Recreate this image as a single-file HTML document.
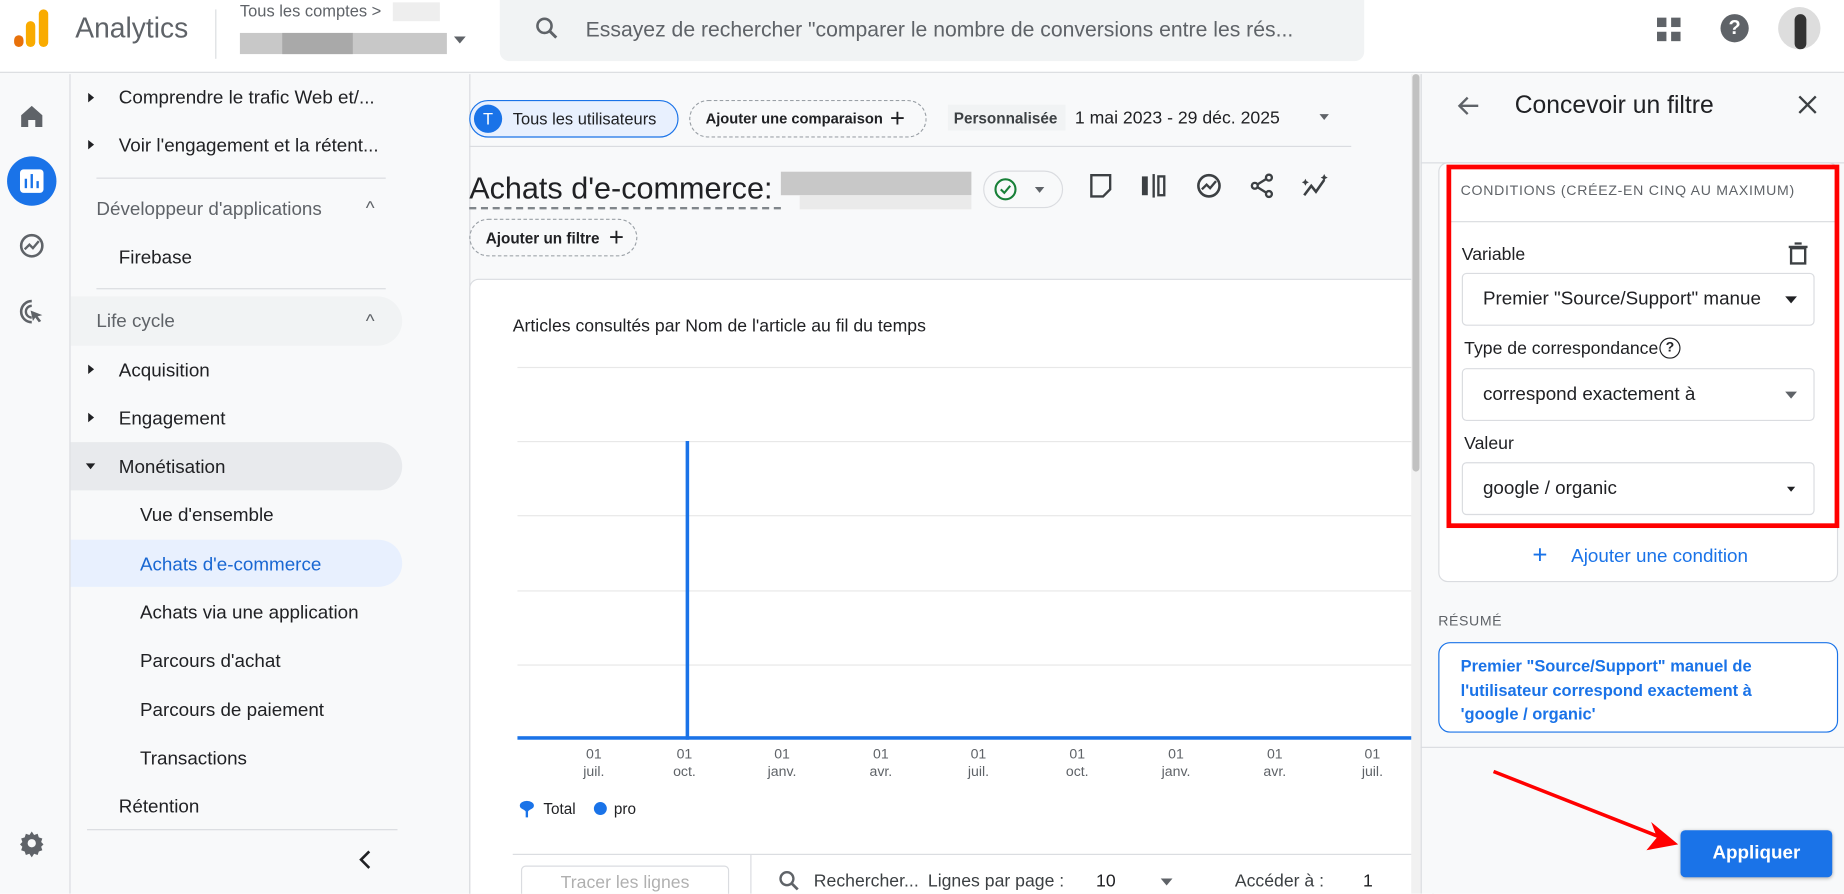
<!DOCTYPE html>
<html><head><meta charset="utf-8"><style>
*{box-sizing:border-box;margin:0;padding:0}
body{width:1844px;height:894px;overflow:hidden;background:#fff;font-family:"Liberation Sans",Arial,sans-serif;color:#202124}
#w{position:absolute;left:0;top:0;width:1568px;height:760px;transform:scale(1.17602);transform-origin:0 0;background:#f8f9fa;overflow:hidden}
.a{position:absolute;white-space:nowrap}
.nav{font-size:16px;color:#202124}
.tri{position:absolute;width:0;height:0;border-top:4px solid transparent;border-bottom:4px solid transparent;border-left:5px solid #202124}
.chip{position:absolute;border:1px dashed #9aa0a6;border-radius:16px;font-size:13px;font-weight:bold;color:#202124;display:flex;align-items:center;padding-left:13px;white-space:nowrap}
.gl{position:absolute;left:440px;width:762px;height:1px;background:#e8e8e8}
.xl{position:absolute;font-size:12px;color:#5f6368;text-align:center;width:40px;line-height:15px}
.sel{position:absolute;left:1243px;width:300px;height:45px;border:1px solid #dadce0;border-radius:4px;background:#fff;font-size:16px;padding-left:17px;display:flex;align-items:center;overflow:hidden;white-space:nowrap}
.dd{position:absolute;right:14px;top:19px;border-left:5px solid transparent;border-right:5px solid transparent;border-top:6px solid #202124}
svg{position:absolute}
</style></head><body><div id="w">
<div class="a" style="left:0;top:0;width:1568px;height:62px;background:#fff;border-bottom:1px solid #dadce0"></div>
<div class="a" style="left:12px;top:30px;width:8px;height:10px;background:#e8710a;border-radius:4px"></div>
<div class="a" style="left:22px;top:18px;width:8px;height:22px;background:#f9ab00;border-radius:4px"></div>
<div class="a" style="left:33px;top:8px;width:8px;height:32px;background:#f9ab00;border-radius:4px"></div>
<div class="a" style="left:64px;top:11px;font-size:24px;color:#5f6368">Analytics</div>
<div class="a" style="left:183px;top:8px;width:1px;height:42px;background:#dadce0"></div>
<div class="a" style="left:204px;top:1px;font-size:14px;color:#5f6368">Tous les comptes &gt;</div>
<div class="a" style="left:334px;top:2px;width:40px;height:16px;background:#eee"></div>
<div class="a" style="left:204px;top:28px;width:176px;height:18px;background:#c8c8c8"></div>
<div class="a" style="left:240px;top:28px;width:60px;height:18px;background:#a9a9a9"></div>
<div class="a" style="left:386px;top:31px;border-left:5px solid transparent;border-right:5px solid transparent;border-top:6px solid #5f6368"></div>
<div class="a" style="left:425px;top:0;width:735px;height:52px;background:#f1f3f4;border-radius:0 0 8px 8px"></div>
<svg style="left:453px;top:12px" width="24" height="24" viewBox="0 0 24 24"><circle cx="10" cy="10" r="6" fill="none" stroke="#5f6368" stroke-width="2.2"/><path d="M14.5 14.5l5.5 5.5" stroke="#5f6368" stroke-width="2.5"/></svg>
<div class="a" style="left:498px;top:15px;font-size:18px;color:#5f6368">Essayez de rechercher "comparer le nombre de conversions entre les rés...</div>
<svg style="left:1408px;top:14px" width="24" height="24" viewBox="0 0 24 24"><g fill="#5f6368"><rect x="1" y="1" width="8" height="8"/><rect x="13" y="1" width="8" height="8"/><rect x="1" y="13" width="8" height="8"/><rect x="13" y="13" width="8" height="8"/></g></svg>
<div class="a" style="left:1463px;top:12px;width:24px;height:24px;border-radius:50%;background:#5f6368;color:#fff;font-size:17px;font-weight:bold;text-align:center;line-height:24px">?</div>
<div class="a" style="left:1512px;top:6px;width:36px;height:36px;border-radius:50%;background:#ddd;overflow:hidden"><div style="margin:6px 0 0 14px;width:10px;height:30px;background:#333;border-radius:5px"></div></div>
<div class="a" style="left:0;top:63px;width:60px;height:697px;background:#f8f9fa;border-right:1px solid #dadce0"></div>
<svg style="left:15px;top:87px" width="24" height="24" viewBox="0 0 24 24"><path d="M3 11L12 3l9 8v10h-6v-6H9v6H3z" fill="#5f6368"/></svg>
<div class="a" style="left:6px;top:133px;width:42px;height:42px;border-radius:50%;background:#1a73e8"></div>
<div class="a" style="left:17px;top:144px;width:20px;height:20px;border-radius:3px;background:#fff"></div>
<div class="a" style="left:21px;top:152px;width:2px;height:8px;background:#1a73e8"></div><div class="a" style="left:26px;top:148px;width:2px;height:12px;background:#1a73e8"></div><div class="a" style="left:31px;top:154px;width:2px;height:6px;background:#1a73e8"></div>
<svg style="left:15px;top:197px" width="24" height="24" viewBox="0 0 24 24"><circle cx="12" cy="12" r="9" fill="none" stroke="#5f6368" stroke-width="2.2"/><path d="M6 15l4-4 3 3 5-6" fill="none" stroke="#5f6368" stroke-width="2"/></svg>
<svg style="left:15px;top:253px" width="24" height="24" viewBox="0 0 24 24"><path d="M12 3a9 9 0 1 0 0 18" fill="none" stroke="#5f6368" stroke-width="2.2"/><path d="M12 7a5 5 0 1 0 0 10" fill="none" stroke="#5f6368" stroke-width="2"/><path d="M11 11l10 4-4 1 3 4-2 1-3-4-2 3z" fill="#5f6368"/></svg>
<svg style="left:15px;top:705px" width="24" height="24" viewBox="0 0 24 24"><path d="M12 2l2 3 3-1 1 3 3 1-1 3 2 2-2 2 1 3-3 1-1 3-3-1-2 3-2-3-3 1-1-3-3-1 1-3-2-2 2-2-1-3 3-1 1-3 3 1z" fill="#5f6368"/><circle cx="12" cy="12" r="3.5" fill="#f8f9fa"/></svg>
<div class="a" style="left:60px;top:63px;width:340px;height:697px;border-right:1px solid #dadce0"></div>
<div class="tri" style="left:75px;top:79px"></div><div class="a nav" style="left:101px;top:75px">Comprendre le trafic Web et/...</div>
<div class="tri" style="left:75px;top:119px"></div><div class="a nav" style="left:101px;top:116px">Voir l'engagement et la rétent...</div>
<div class="a" style="left:82px;top:151px;width:246px;height:1px;background:#dadce0"></div>
<div class="a nav" style="left:82px;top:170px;color:#5f6368">Développeur d'applications</div><div class="a" style="left:311px;top:169px;font-size:16px;color:#5f6368">^</div>
<div class="a nav" style="left:101px;top:211px">Firebase</div>
<div class="a" style="left:82px;top:245px;width:246px;height:1px;background:#dadce0"></div>
<div class="a" style="left:60px;top:252px;width:282px;height:42px;background:#f1f3f4;border-radius:0 21px 21px 0"></div>
<div class="a nav" style="left:82px;top:265px;color:#5f6368">Life cycle</div><div class="a" style="left:311px;top:265px;font-size:16px;color:#5f6368">^</div>
<div class="tri" style="left:75px;top:310px"></div><div class="a nav" style="left:101px;top:307px">Acquisition</div>
<div class="tri" style="left:75px;top:351px"></div><div class="a nav" style="left:101px;top:348px">Engagement</div>
<div class="a" style="left:60px;top:376px;width:282px;height:41px;background:#e8eaed;border-radius:0 21px 21px 0"></div>
<div class="a" style="left:73px;top:394px;border-left:4px solid transparent;border-right:4px solid transparent;border-top:5px solid #202124"></div><div class="a nav" style="left:101px;top:389px">Monétisation</div>
<div class="a nav" style="left:119px;top:430px">Vue d'ensemble</div>
<div class="a" style="left:60px;top:459px;width:282px;height:40px;background:#e8f0fe;border-radius:0 20px 20px 0"></div>
<div class="a nav" style="left:119px;top:472px;color:#1967d2">Achats d'e-commerce</div>
<div class="a nav" style="left:119px;top:513px">Achats via une application</div>
<div class="a nav" style="left:119px;top:554px">Parcours d'achat</div>
<div class="a nav" style="left:119px;top:596px">Parcours de paiement</div>
<div class="a nav" style="left:119px;top:637px">Transactions</div>
<div class="a nav" style="left:101px;top:678px">Rétention</div>
<div class="a" style="left:74px;top:705px;width:264px;height:1px;background:#dadce0"></div>
<svg style="left:303px;top:722px" width="16" height="18" viewBox="0 0 16 18"><path d="M11 2L4 9l7 7" fill="none" stroke="#202124" stroke-width="2.2"/></svg>
<div class="a" style="left:399px;top:85px;width:178px;height:32px;border:1px solid #1a73e8;background:#e8f0fe;border-radius:16px"></div>
<div class="a" style="left:403px;top:89px;width:24px;height:24px;border-radius:50%;background:#1a73e8;color:#fff;font-size:14px;text-align:center;line-height:24px">T</div>
<div class="a" style="left:436px;top:93px;font-size:14px">Tous les utilisateurs</div>
<div class="chip" style="left:586px;top:85px;width:202px;height:32px;font-size:12.5px">Ajouter une comparaison <span style="font-size:22px;font-weight:normal;margin-left:6px">+</span></div>
<div class="a" style="left:806px;top:89px;width:100px;height:22px;background:#f1f3f4"></div>
<div class="a" style="left:811px;top:93px;font-size:13px;font-weight:bold;color:#3c4043">Personnalisée</div>
<div class="a" style="left:914px;top:92px;font-size:15px">1 mai 2023 - 29 déc. 2025</div>
<div class="a" style="left:1122px;top:97px;border-left:4px solid transparent;border-right:4px solid transparent;border-top:5px solid #5f6368"></div>
<div class="a" style="left:399px;top:124px;width:750px;height:1px;background:#dadce0"></div>
<div class="a" style="left:399px;top:145px;font-size:26px;color:#202124">Achats d'e-commerce:</div>
<div class="a" style="left:399px;top:176px;width:265px;border-top:2px dashed #80868b"></div>
<div class="a" style="left:664px;top:146px;width:162px;height:20px;background:#c8c8c8"></div><div class="a" style="left:680px;top:166px;width:146px;height:12px;background:#eaeaea"></div>
<div class="a" style="left:836px;top:145px;width:68px;height:32px;border:1px solid #dadce0;border-radius:16px"></div>
<svg style="left:845px;top:151px" width="20" height="20" viewBox="0 0 20 20"><circle cx="10" cy="10" r="8.5" fill="none" stroke="#188038" stroke-width="1.8"/><path d="M6 10l3 3 5-6" fill="none" stroke="#188038" stroke-width="1.8"/></svg>
<div class="a" style="left:880px;top:159px;border-left:4px solid transparent;border-right:4px solid transparent;border-top:5px solid #5f6368"></div>
<svg style="left:924px;top:146px" width="24" height="24" viewBox="0 0 24 24"><path d="M4 3h16v12l-6 6H4z" fill="none" stroke="#3c4043" stroke-width="2"/></svg>
<svg style="left:969px;top:146px" width="24" height="24" viewBox="0 0 24 24"><rect x="2" y="4" width="5" height="16" fill="#3c4043"/><rect x="11" y="2" width="2" height="20" fill="#3c4043"/><rect x="16" y="4" width="5" height="16" fill="none" stroke="#3c4043" stroke-width="2"/></svg>
<svg style="left:1016px;top:146px" width="24" height="24" viewBox="0 0 24 24"><circle cx="12" cy="12" r="9" fill="none" stroke="#3c4043" stroke-width="2.2"/><path d="M6 15l4-4 3 3 5-6" fill="none" stroke="#3c4043" stroke-width="2"/></svg>
<svg style="left:1061px;top:146px" width="24" height="24" viewBox="0 0 24 24"><circle cx="18" cy="5" r="2.5" fill="none" stroke="#3c4043" stroke-width="2"/><circle cx="6" cy="12" r="2.5" fill="none" stroke="#3c4043" stroke-width="2"/><circle cx="18" cy="19" r="2.5" fill="none" stroke="#3c4043" stroke-width="2"/><path d="M8 11l8-5M8 13l8 5" stroke="#3c4043" stroke-width="2"/></svg>
<svg style="left:1106px;top:146px" width="26" height="24" viewBox="0 0 26 24"><path d="M3 20l6-8 4 5 7-10" fill="none" stroke="#3c4043" stroke-width="2.2"/><path d="M4 6l1 2 2 1-2 1-1 2-1-2-2-1 2-1zM20 2l1 2 2 1-2 1-1 2-1-2-2-1 2-1z" fill="#3c4043"/></svg>
<div class="chip" style="left:399px;top:186px;width:143px;height:32px">Ajouter un filtre <span style="font-size:22px;font-weight:normal;margin-left:8px">+</span></div>
<div class="a" style="left:399px;top:237px;width:820px;height:530px;background:#fff;border:1px solid #dadce0;border-radius:8px 0 0 0"></div>
<div class="a" style="left:436px;top:269px;font-size:15px">Articles consultés par Nom de l'article au fil du temps</div>
<div class="gl" style="top:312px"></div><div class="gl" style="top:375px"></div><div class="gl" style="top:438px"></div><div class="gl" style="top:502px"></div><div class="gl" style="top:565px"></div>
<div class="a" style="left:583px;top:375px;width:3px;height:254px;background:#1a73e8"></div>
<div class="a" style="left:440px;top:626px;width:762px;height:3px;background:#1a73e8"></div>
<div class="xl" style="left:485px;top:634px">01<br>juil.</div><div class="xl" style="left:562px;top:634px">01<br>oct.</div><div class="xl" style="left:645px;top:634px">01<br>janv.</div><div class="xl" style="left:729px;top:634px">01<br>avr.</div><div class="xl" style="left:812px;top:634px">01<br>juil.</div><div class="xl" style="left:896px;top:634px">01<br>oct.</div><div class="xl" style="left:980px;top:634px">01<br>janv.</div><div class="xl" style="left:1064px;top:634px">01<br>avr.</div><div class="xl" style="left:1147px;top:634px">01<br>juil.</div>
<svg style="left:441px;top:680px" width="14" height="16" viewBox="0 0 14 16"><path d="M1 5a6 4 0 0 1 12 0c0 3-4 3-5 5v5H6v-5C5 8 1 8 1 5z" fill="#1a73e8"/></svg>
<div class="a" style="left:462px;top:680px;font-size:13px">Total</div>
<div class="a" style="left:505px;top:682px;width:11px;height:11px;border-radius:50%;background:#1a73e8"></div>
<div class="a" style="left:522px;top:680px;font-size:13px">pro</div>
<div class="a" style="left:436px;top:726px;width:766px;height:1px;background:#dadce0"></div>
<div class="a" style="left:443px;top:736px;width:177px;height:30px;border:1px solid #dadce0;border-radius:4px;font-size:15px;color:#b0b0b0;text-align:center;padding-top:5px">Tracer les lignes</div>
<div class="a" style="left:638px;top:727px;width:1px;height:33px;background:#dadce0"></div>
<svg style="left:660px;top:738px" width="22" height="22" viewBox="0 0 24 24"><circle cx="10" cy="10" r="6" fill="none" stroke="#5f6368" stroke-width="2.2"/><path d="M14.5 14.5l5.5 5.5" stroke="#5f6368" stroke-width="2.5"/></svg>
<div class="a" style="left:692px;top:741px;font-size:15px;color:#3c4043">Rechercher...</div>
<div class="a" style="left:789px;top:741px;font-size:15px;color:#3c4043">Lignes par page :</div>
<div class="a" style="left:932px;top:741px;font-size:15px">10</div>
<div class="a" style="left:987px;top:747px;border-left:5px solid transparent;border-right:5px solid transparent;border-top:6px solid #5f6368"></div>
<div class="a" style="left:1050px;top:741px;font-size:15px;color:#3c4043">Accéder à :</div>
<div class="a" style="left:1159px;top:741px;font-size:15px">1</div>
<div class="a" style="left:1200px;top:63px;width:8px;height:697px;background:#f1f1f1"></div>
<div class="a" style="left:1201px;top:63px;width:6px;height:338px;background:#c1c1c1;border-radius:3px"></div>
<div class="a" style="left:1208px;top:63px;width:360px;height:697px;background:#f8f9fa;border-left:1px solid #dadce0"></div>
<svg style="left:1237px;top:78px" width="24" height="24" viewBox="0 0 24 24"><path d="M20 12H5M11 5l-7 7 7 7" fill="none" stroke="#5f6368" stroke-width="2"/></svg>
<div class="a" style="left:1288px;top:78px;font-size:21px">Concevoir un filtre</div>
<svg style="left:1527px;top:79px" width="20" height="20" viewBox="0 0 20 20"><path d="M3 3l14 14M17 3L3 17" stroke="#3c4043" stroke-width="2"/></svg>
<div class="a" style="left:1208px;top:138px;width:360px;height:1px;background:#dadce0"></div>
<div class="a" style="left:1223px;top:138px;width:340px;height:357px;background:#fff;border:1px solid #dadce0;border-radius:8px"></div>
<div class="a" style="left:1242px;top:155px;font-size:12px;color:#5f6368;letter-spacing:.6px">CONDITIONS (CRÉEZ-EN CINQ AU MAXIMUM)</div>
<div class="a" style="left:1230px;top:188px;width:333px;height:1px;background:#dadce0"></div>
<div class="a" style="left:1243px;top:208px;font-size:15px">Variable</div>
<svg style="left:1520px;top:206px" width="18" height="20" viewBox="0 0 18 20"><path d="M3 5h12v13H3zM1 4h16M6 1h6" fill="none" stroke="#3c4043" stroke-width="2"/></svg>
<div class="sel" style="top:232px"><span style="width:236px;overflow:hidden;display:block">Premier "Source/Support" manuel de</span><div class="dd" style="border-top-color:#202124"></div></div>
<div class="a" style="left:1245px;top:288px;font-size:15px">Type de correspondance</div>
<div class="a" style="left:1411px;top:287px;width:18px;height:18px;border:1.8px solid #202124;border-radius:50%;font-size:12px;font-weight:bold;text-align:center;line-height:15px">?</div>
<div class="sel" style="top:313px">correspond exactement à<div class="dd" style="border-top-color:#5f6368"></div></div>
<div class="a" style="left:1245px;top:369px;font-size:15px">Valeur</div>
<div class="sel" style="top:393px">google / organic<div class="dd" style="transform:scale(.7);border-top-color:#202124"></div></div>
<div class="a" style="left:1230px;top:140px;width:334px;height:309px;border:4px solid #f00"></div>
<div class="a" style="left:1303px;top:460px;font-size:22px;color:#1a73e8;line-height:24px">+</div>
<div class="a" style="left:1336px;top:465px;font-size:16px;color:#1a73e8">Ajouter une condition</div>
<div class="a" style="left:1223px;top:521px;font-size:12px;color:#5f6368;letter-spacing:.5px">RÉSUMÉ</div>
<div class="a" style="left:1223px;top:546px;width:340px;height:77px;border:1px solid #1a73e8;border-radius:10px;background:#fff"></div>
<div class="a" style="left:1242px;top:556px;font-size:14px;font-weight:bold;color:#1a73e8;line-height:20.5px;white-space:normal;width:280px">Premier "Source/Support" manuel de l'utilisateur correspond exactement à 'google / organic'</div>
<div class="a" style="left:1208px;top:635px;width:360px;height:1px;background:#dadce0"></div>
<svg style="left:1260px;top:650px" width="175" height="80" viewBox="0 0 175 80"><path d="M10 6L152 62" stroke="#f00" stroke-width="3"/><path d="M167 68L140 73 149 62 144 49z" fill="#f00"/></svg>
<div class="a" style="left:1429px;top:706px;width:129px;height:40px;background:#1a73e8;border-radius:4px;color:#fff;font-size:16px;font-weight:bold;text-align:center;line-height:40px;box-shadow:0 1px 3px rgba(0,0,0,.3)">Appliquer</div>
</div></body></html>
